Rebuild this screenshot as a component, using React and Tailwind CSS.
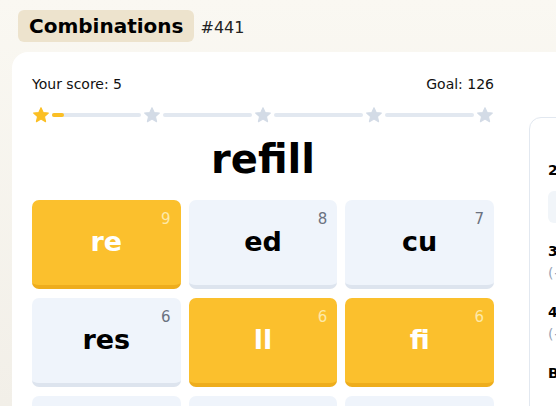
import React from 'react'

const FONT = { fontFamily: '"DejaVu Sans", "Noto Sans", sans-serif' }

const TILES = [
  { text: 're', n: 9, on: true },
  { text: 'ed', n: 8, on: false },
  { text: 'cu', n: 7, on: false },
  { text: 'res', n: 6, on: false },
  { text: 'll', n: 6, on: true },
  { text: 'fi', n: 6, on: true },
  { text: '', n: null, on: false },
  { text: '', n: null, on: false },
  { text: '', n: null, on: false },
]

function Star({ on }) {
  return (
    <svg width="18" height="18" viewBox="0 0 24 24" className="flex-shrink-0">
      <path
        d="M12 2.2l2.9 6.4 6.9.7-5.2 4.7 1.5 6.9L12 17.4l-6.1 3.5 1.5-6.9-5.2-4.7 6.9-.7z"
        fill={on ? '#fbbf24' : '#d3dbe6'}
        stroke={on ? '#fbbf24' : '#d3dbe6'}
        strokeWidth="1.5"
        strokeLinejoin="round"
      />
    </svg>
  )
}

function Tile({ t }) {
  return (
    <div
      className={`relative h-[89px] rounded-[7px] flex items-center justify-center border-b-[4px] ${
        t.on ? 'bg-[#fbc02d] border-[#eead1c]' : 'bg-[#eff4fb] border-[#dde4ee]'
      }`}
    >
      {t.n && (
        <span className={`absolute top-[8px] right-[10px] text-[15px] ${t.on ? 'text-[#fde9a8]' : 'text-[#6b7280]'}`}>
          {t.n}
        </span>
      )}
      <span className={`text-[27px] font-bold ${t.on ? 'text-white' : 'text-black'}`}>{t.text}</span>
    </div>
  )
}

export default function App() {
  return (
    <div
      className="w-[556px] h-[406px] overflow-hidden bg-gradient-to-b from-[#faf8f2] to-[#f2efe8]"
      style={FONT}
    >
      <div className="flex items-start gap-[6px] pl-[18px] pt-[10px] h-[52px]">
        <div className="bg-[#ede3cd] rounded-md px-[11px] h-[32px] flex items-center text-[20px] font-bold text-black">
          Combinations
        </div>
        <span className="text-[16px] text-[#222] mt-[6px]">#441</span>
      </div>

      <div className="ml-[12px] w-[620px] h-[400px] bg-white rounded-tl-[16px] flex pl-[20px] pt-[22px]">
        <div className="w-[462px] flex-shrink-0">
          <div className="flex justify-between text-[14px] text-[#111]">
            <span>Your score: 5</span>
            <span>Goal: 126</span>
          </div>

          <div className="flex items-center mt-[11px]">
            <Star on />
            <div className="flex-1 mx-[2px] h-[4px] rounded-full bg-[#e2e8f0] relative">
              <div className="absolute left-0 top-0 h-[4px] w-[12px] rounded-full bg-[#fbbf24]" />
            </div>
            <Star />
            <div className="flex-1 mx-[2px] h-[4px] rounded-full bg-[#e2e8f0]" />
            <Star />
            <div className="flex-1 mx-[2px] h-[4px] rounded-full bg-[#e2e8f0]" />
            <Star />
            <div className="flex-1 mx-[2px] h-[4px] rounded-full bg-[#e2e8f0]" />
            <Star />
          </div>

          <h1 className="text-center text-[40px] font-bold text-black leading-none mt-[15px] mb-[21px]">refill</h1>

          <div className="grid grid-cols-3 gap-x-[8px] gap-y-[9px]">
            {TILES.map((t, i) => (
              <Tile key={i} t={t} />
            ))}
          </div>
        </div>

        <div className="ml-[35px] mt-[43px] w-[220px] h-[400px] rounded-tl-[12px] border border-[#e2e8f0] px-[18px] pt-[42px] text-[14px] whitespace-nowrap">
          <div className="font-bold text-black">2 letters</div>
          <div className="mt-[10px] h-[32px] rounded-md bg-[#f1f5f9]" />
          <div className="font-bold text-black mt-[18px]">3 letters</div>
          <div className="text-[#94a3b8] mt-[1px]">(+12)</div>
          <div className="font-bold text-black mt-[18px]">4 letters</div>
          <div className="text-[#94a3b8] mt-[1px]">(+8)</div>
          <div className="font-bold text-black mt-[18px]">Bonus</div>
        </div>
      </div>
    </div>
  )
}
